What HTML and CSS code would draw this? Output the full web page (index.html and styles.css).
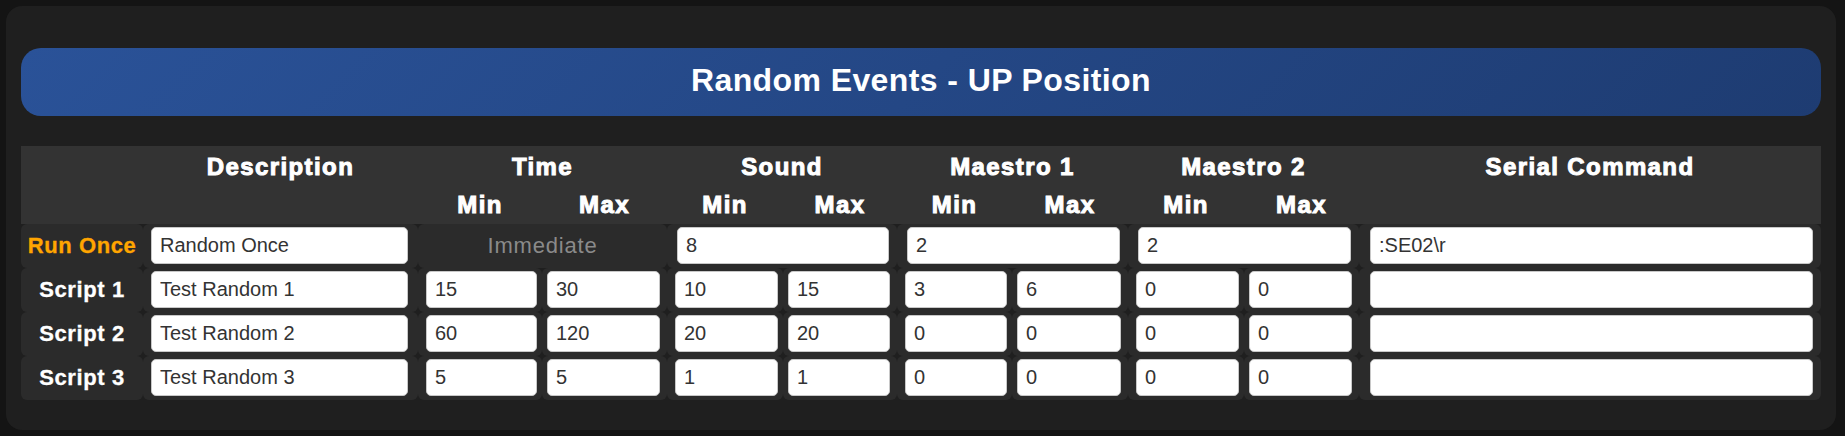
FILE: index.html
```html
<!DOCTYPE html>
<html lang="en">
<head>
<meta charset="utf-8">
<title>Random Events - UP Position</title>
<link rel="stylesheet" href="styles.css">
</head>
<body>
<div class="panel">
  <div class="banner">Random Events - UP Position</div>
  <table class="grid">
    <colgroup>
      <col class="w-label"><col class="w-desc">
      <col class="w-tmin"><col class="w-tmax">
      <col class="w-smin"><col class="w-smax">
      <col class="w-m1min"><col class="w-m1max">
      <col class="w-m2min"><col class="w-m2max">
      <col class="w-serial">
    </colgroup>
    <thead>
      <tr class="hrow1">
        <th></th><th>Description</th><th colspan="2">Time</th><th colspan="2">Sound</th><th colspan="2">Maestro 1</th><th colspan="2">Maestro 2</th><th>Serial Command</th>
      </tr>
      <tr class="hrow2">
        <th></th><th></th><th>Min</th><th>Max</th><th>Min</th><th>Max</th><th>Min</th><th>Max</th><th>Min</th><th>Max</th><th></th>
      </tr>
    </thead>
    <tbody>
      <tr>
        <td class="label once">Run Once</td>
        <td class="desc"><input class="field" type="text" value="Random Once"></td>
        <td class="imm" colspan="2">Immediate</td>
        <td class="span" colspan="2"><input class="field" type="text" value="8"></td>
        <td class="span" colspan="2"><input class="field" type="text" value="2"></td>
        <td class="span" colspan="2"><input class="field" type="text" value="2"></td>
        <td class="serial"><input class="field" type="text" value=":SE02\r"></td>
      </tr>
      <tr>
        <td class="label">Script 1</td>
        <td class="desc"><input class="field" type="text" value="Test Random 1"></td>
        <td class="min"><input class="field" type="text" value="15"></td>
        <td class="max"><input class="field" type="text" value="30"></td>
        <td class="min"><input class="field" type="text" value="10"></td>
        <td class="max"><input class="field" type="text" value="15"></td>
        <td class="min"><input class="field" type="text" value="3"></td>
        <td class="max"><input class="field" type="text" value="6"></td>
        <td class="min"><input class="field" type="text" value="0"></td>
        <td class="max"><input class="field" type="text" value="0"></td>
        <td class="serial"><input class="field" type="text" value=""></td>
      </tr>
      <tr>
        <td class="label">Script 2</td>
        <td class="desc"><input class="field" type="text" value="Test Random 2"></td>
        <td class="min"><input class="field" type="text" value="60"></td>
        <td class="max"><input class="field" type="text" value="120"></td>
        <td class="min"><input class="field" type="text" value="20"></td>
        <td class="max"><input class="field" type="text" value="20"></td>
        <td class="min"><input class="field" type="text" value="0"></td>
        <td class="max"><input class="field" type="text" value="0"></td>
        <td class="min"><input class="field" type="text" value="0"></td>
        <td class="max"><input class="field" type="text" value="0"></td>
        <td class="serial"><input class="field" type="text" value=""></td>
      </tr>
      <tr>
        <td class="label">Script 3</td>
        <td class="desc"><input class="field" type="text" value="Test Random 3"></td>
        <td class="min"><input class="field" type="text" value="5"></td>
        <td class="max"><input class="field" type="text" value="5"></td>
        <td class="min"><input class="field" type="text" value="1"></td>
        <td class="max"><input class="field" type="text" value="1"></td>
        <td class="min"><input class="field" type="text" value="0"></td>
        <td class="max"><input class="field" type="text" value="0"></td>
        <td class="min"><input class="field" type="text" value="0"></td>
        <td class="max"><input class="field" type="text" value="0"></td>
        <td class="serial"><input class="field" type="text" value=""></td>
      </tr>
    </tbody>
  </table>
</div>
</body>
</html>
```

FILE: styles.css
```css
html, body {
  margin: 0;
  padding: 0;
  background: #141414;
}

body {
  font-family: "Liberation Sans", Arial, sans-serif;
  color: #fff;
}

.panel {
  margin: 6px 9px 7px 6px;
  padding: 42px 15px 30px;
  background: #1f1f1f;
  border-radius: 16px;
}

.banner {
  height: 64px;
  line-height: 64px;
  padding-bottom: 4px;
  margin-bottom: 30px;
  border-radius: 20px;
  background: linear-gradient(135deg, #2a5298 0%, #1e3c72 100%);
  text-align: center;
  font-family: "Liberation Sans", Arial, sans-serif;
  font-size: 32px;
  font-weight: bold;
  letter-spacing: 0.4px;
  color: #fff;
}

.grid {
  width: 1800px;
  table-layout: fixed;
  border-collapse: separate;
  border-spacing: 0;
}

.w-label { width: 122px; }
.w-desc { width: 275px; }
.w-tmin { width: 124px; }
.w-tmax { width: 125px; }
.w-smin { width: 116px; }
.w-smax { width: 114px; }
.w-m1min { width: 115px; }
.w-m1max { width: 116px; }
.w-m2min { width: 116px; }
.w-m2max { width: 115px; }
.w-serial { width: 462px; }

.grid th {
  background: #333333;
  color: #fff;
  font-family: "Liberation Sans", Arial, sans-serif;
  font-size: 24px;
  font-weight: bold;
  letter-spacing: 1.4px;
  -webkit-text-stroke: 1px #fff;
  text-align: center;
  padding: 0;
  white-space: nowrap;
}

.hrow1 th {
  height: 41px;
  line-height: 41px;
}

.hrow2 th {
  height: 35px;
  line-height: 35px;
  padding-bottom: 2px;
}

.grid td {
  background: #2b2b2b;
  border-radius: 6px;
  height: 37px;
  padding: 3px 6px 4px 6px;
  vertical-align: middle;
}

.grid td.label {
  text-align: center;
  font-family: "Liberation Sans", Arial, sans-serif;
  font-size: 22px;
  font-weight: bold;
  letter-spacing: 0.6px;
  -webkit-text-stroke: 0.3px currentColor;
  color: #fff;
  padding: 0;
  white-space: nowrap;
}

.grid td.label.once {
  color: #ffa500;
}

.grid td.desc { padding-left: 8px; padding-right: 10px; }
.grid td.min { padding-left: 8px; padding-right: 5px; }
.grid td.max { padding-left: 5px; padding-right: 7px; }
.grid td.span { padding-left: 10px; padding-right: 8px; }
.grid td.serial { padding-left: 11px; padding-right: 8px; }

.grid td.imm {
  text-align: center;
  color: #8a8a8a;
  font-family: "Liberation Sans", Arial, sans-serif;
  font-size: 22px;
  letter-spacing: 0.8px;
}

.field {
  display: block;
  box-sizing: border-box;
  width: 100%;
  height: 37px;
  margin: 0;
  padding: 0 8px;
  border: 1px solid #c8c8c8;
  border-radius: 5px;
  background: #ffffff;
  color: #333333;
  font-family: "Liberation Sans", Arial, sans-serif;
  font-size: 20px;
  outline: none;
}
```
